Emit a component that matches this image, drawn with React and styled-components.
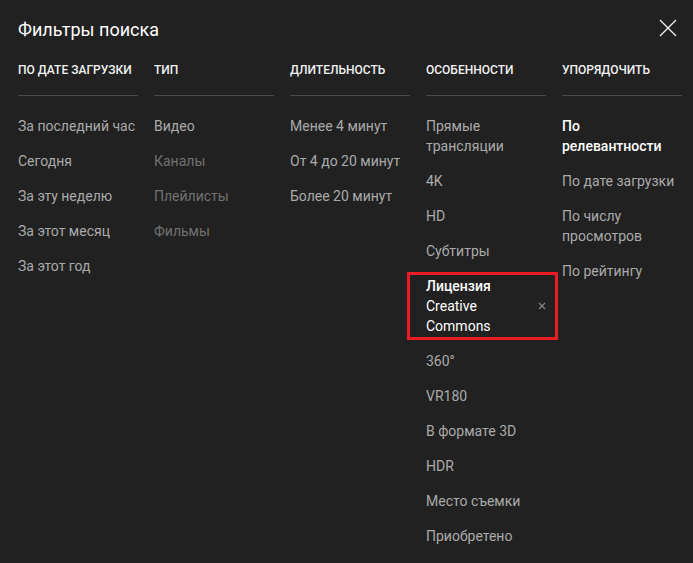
import styled, { createGlobalStyle } from 'styled-components'

const GlobalStyle = createGlobalStyle`
  html, body {
    margin: 0;
    padding: 0;
    background: #212121;
  }
  body {
    font-family: Roboto, "Noto Sans", Arial, sans-serif;
    -webkit-font-smoothing: antialiased;
  }
`;

const columns = [
  {
    title: 'По дате загрузки',
    items: [
      { label: 'За последний час' },
      { label: 'Сегодня' },
      { label: 'За эту неделю' },
      { label: 'За этот месяц' },
      { label: 'За этот год' },
    ],
  },
  {
    title: 'Тип',
    items: [
      { label: 'Видео' },
      { label: 'Каналы', disabled: true },
      { label: 'Плейлисты', disabled: true },
      { label: 'Фильмы', disabled: true },
    ],
  },
  {
    title: 'Длительность',
    items: [
      { label: 'Менее 4 минут' },
      { label: 'От 4 до 20 минут' },
      { label: 'Более 20 минут' },
    ],
  },
  {
    title: 'Особенности',
    items: [
      { label: 'Прямые трансляции', narrow: true },
      { label: '4K' },
      { label: 'HD' },
      { label: 'Субтитры' },
      { label: 'Лицензия', extra: 'Creative Commons', selected: true, removable: true, marked: true },
      { label: '360°' },
      { label: 'VR180' },
      { label: 'В формате 3D' },
      { label: 'HDR' },
      { label: 'Место съемки' },
      { label: 'Приобретено' },
    ],
  },
  {
    title: 'Упорядочить',
    items: [
      { label: 'По релевантности', selected: true },
      { label: 'По дате загрузки' },
      { label: 'По числу просмотров', narrow: true },
      { label: 'По рейтингу' },
    ],
  },
];

function App() {
  return (
    <>
      <GlobalStyle />
      <Dialog>
        <Header>
          <Title>Фильтры поиска</Title>
          <CloseButton aria-label="Закрыть">
            <svg width="18" height="18" viewBox="0 0 18 18">
              <path d="M1 1 L17 17 M17 1 L1 17" stroke="#f1f1f1" strokeWidth="1.3" fill="none" />
            </svg>
          </CloseButton>
        </Header>
        <Columns>
          {columns.map((col) => (
            <Column key={col.title}>
              <GroupTitle>{col.title}</GroupTitle>
              {col.items.map((item) => (
                <Option
                  key={item.label}
                  $disabled={item.disabled}
                  $selected={item.selected}
                  $marked={item.marked}
                >
                  <OptionText $narrow={item.narrow || item.removable}>
                    {item.label}
                    {item.extra && <Latin> {item.extra}</Latin>}
                  </OptionText>
                  {item.removable && (
                    <RemoveIcon width="8" height="8" viewBox="0 0 8 8">
                      <path d="M1 1 L7 7 M7 1 L1 7" stroke="#8a8a8a" strokeWidth="1.1" fill="none" />
                    </RemoveIcon>
                  )}
                </Option>
              ))}
            </Column>
          ))}
        </Columns>
      </Dialog>
    </>
  )
}

const Dialog = styled.div`
  width: 693px;
  height: 563px;
  box-sizing: border-box;
  padding: 16px 13px 0 18px;
  background: #212121;
  overflow: hidden;
`;

const Header = styled.div`
  display: flex;
  align-items: center;
  justify-content: space-between;
  height: 28px;
`;

const Title = styled.h2`
  margin: 0;
  font-size: 18px;
  font-weight: 400;
  line-height: 28px;
  color: #fff;
`;

const CloseButton = styled.button`
  display: flex;
  align-items: center;
  justify-content: center;
  width: 24px;
  height: 24px;
  padding: 0;
  margin-top: -4px;
  border: none;
  background: transparent;
  cursor: pointer;
`;

const Columns = styled.div`
  display: grid;
  grid-template-columns: repeat(5, 120px);
  column-gap: 16px;
  margin-top: 14px;
`;

const Column = styled.div`
  display: flex;
  flex-direction: column;
`;

const GroupTitle = styled.div`
  font-size: 12px;
  font-weight: 500;
  line-height: 24px;
  text-transform: uppercase;
  color: #f1f1f1;
  padding-bottom: 13px;
  border-bottom: 1px solid #4a4a4a;
  margin-bottom: 12.5px;
  white-space: nowrap;
`;

const Option = styled.div`
  position: relative;
  display: flex;
  align-items: center;
  justify-content: space-between;
  padding: 7.5px 0;
  font-size: 14px;
  line-height: 20px;
  font-weight: ${({ $selected }) => ($selected ? 500 : 400)};
  color: ${({ $selected, $disabled }) =>
    $selected ? '#fff' : $disabled ? '#717171' : '#aaaaaa'};

  &::after {
    content: '';
    display: ${({ $marked }) => ($marked ? 'block' : 'none')};
    position: absolute;
    top: 3.5px;
    bottom: 3.5px;
    left: -19px;
    right: -12px;
    border: 3px solid #ec1c24;
    pointer-events: none;
  }
`;

const OptionText = styled.span`
  max-width: ${({ $narrow }) => ($narrow ? '100px' : 'none')};
  white-space: normal;
`;

const Latin = styled.span`
  font-weight: 400;
`;

const RemoveIcon = styled.svg`
  flex: none;
  margin-right: 0px;
`;

export default App
